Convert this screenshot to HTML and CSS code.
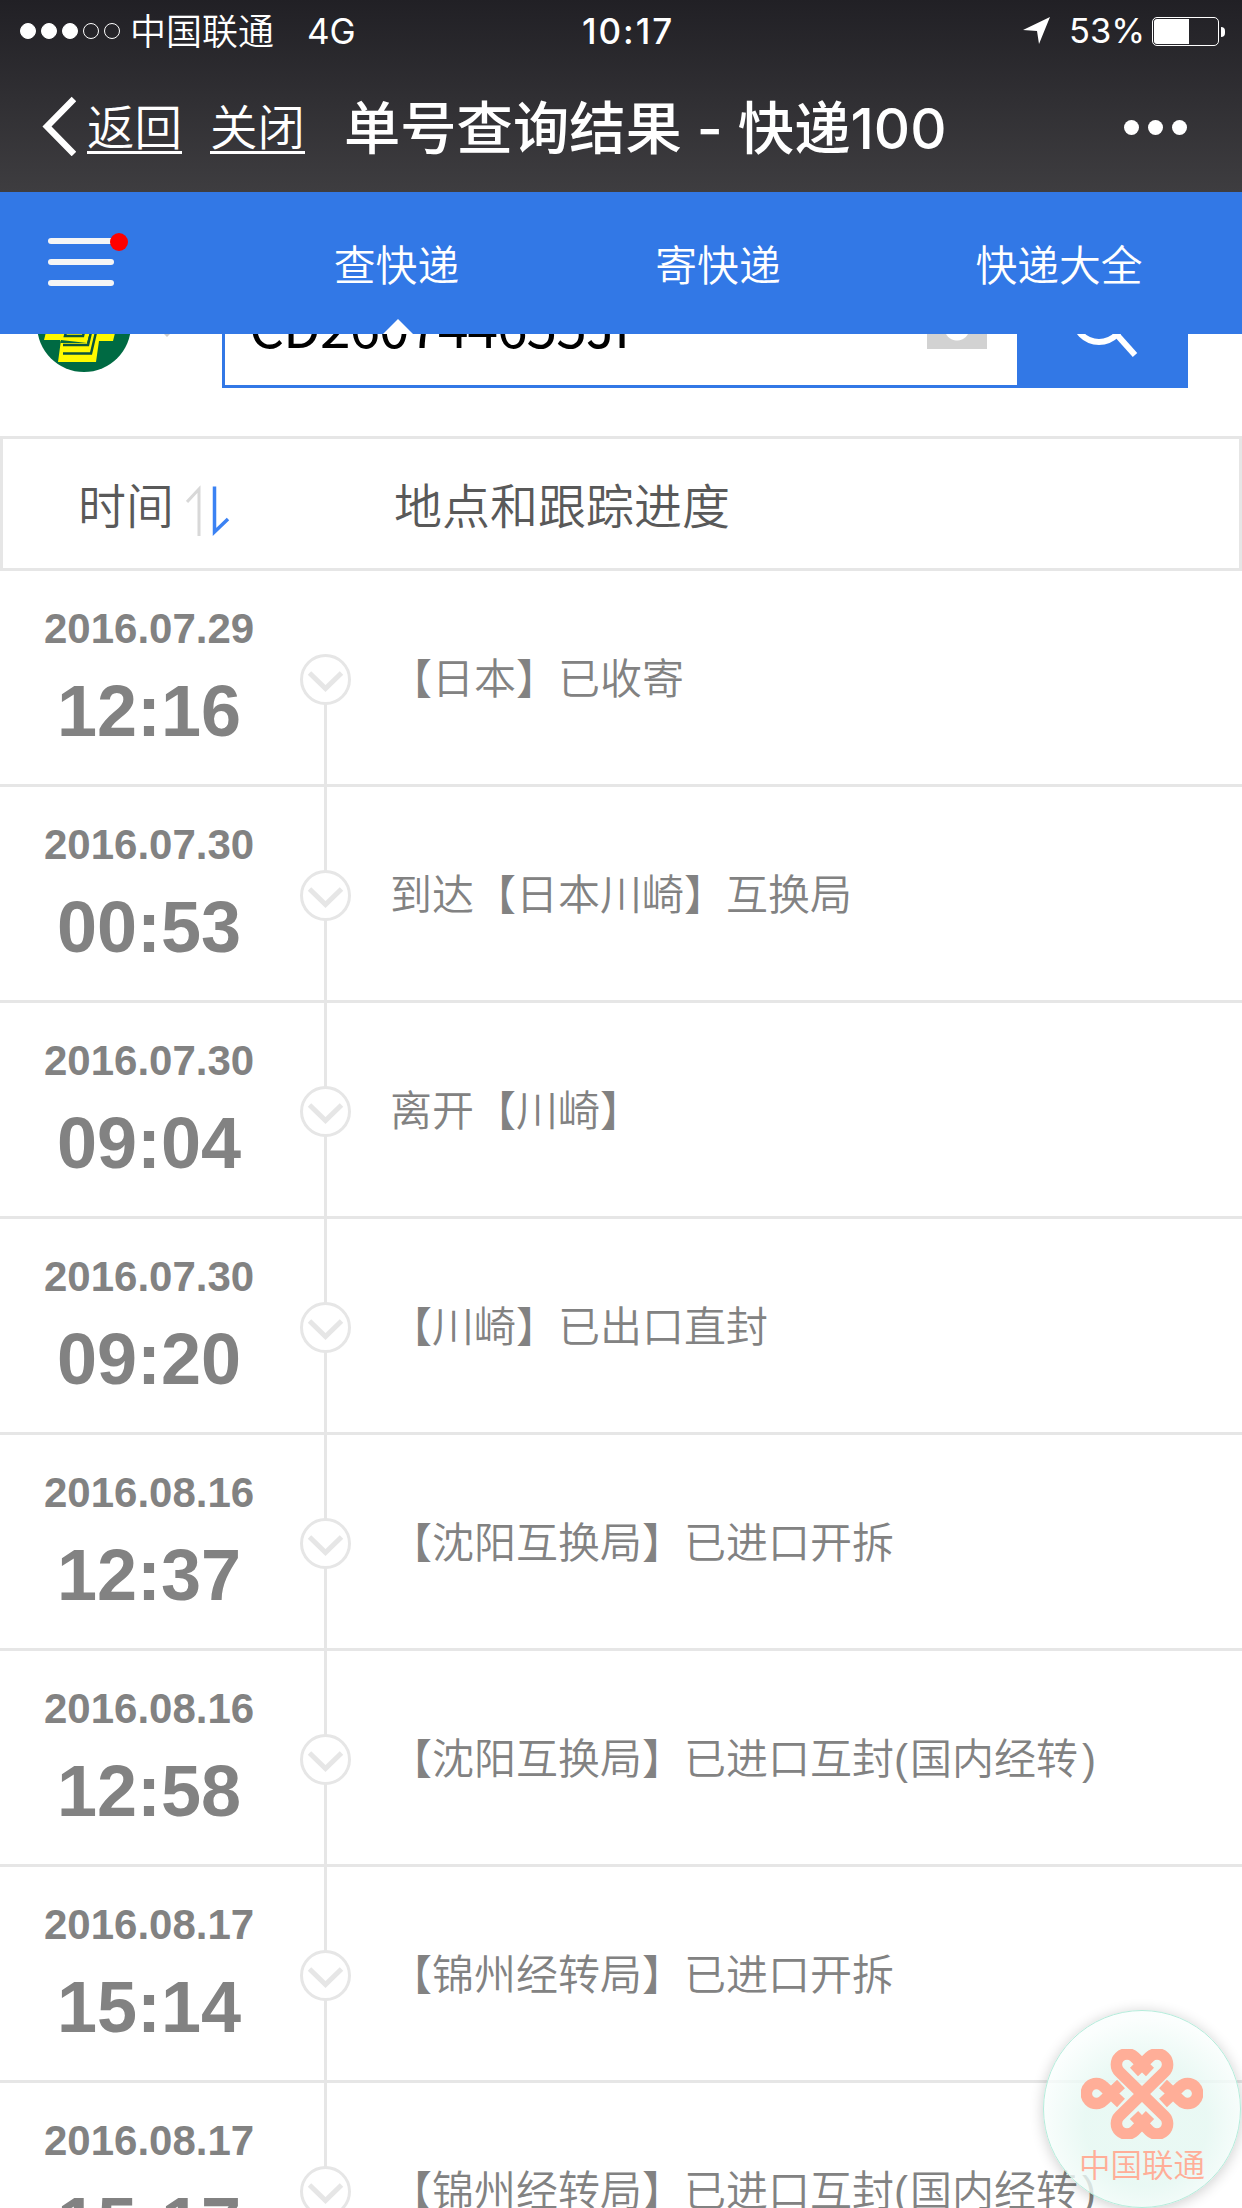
FILE: index.html
```html
<!DOCTYPE html>
<html lang="zh-CN">
  <head>
    <meta charset="UTF-8" />
    <meta name="viewport" content="width=device-width, initial-scale=1.0" />
    <title>单号查询结果 - 快递100</title>
    <link rel="stylesheet" href="styles.css">
  </head>
  <body>
    <header class="top">
      <div class="status">
        <div class="signal">
          <i class="on"></i><i class="on"></i><i class="on"></i><i></i><i></i>
        </div>
        <span class="carrier">中国联通</span>
        <span class="network">4G</span>
        <span class="clock">10:17</span>
        <svg class="locate" width="28" height="28" viewBox="0 0 28 28">
          <path d="M0 13 27 0 16 27 14 14Z" fill="#fff" />
        </svg>
        <span class="percent">53%</span>
        <div class="battery"><i></i></div>
      </div>
      <div class="titlebar">
        <svg class="back" width="34" height="60" viewBox="0 0 34 60">
          <path d="M32 3 5 30.500 32 58" fill="none" stroke="#fff" stroke-width="6.500" />
        </svg>
        <a class="link">返回</a>
        <a class="link">关闭</a>
        <h1>单号查询结果 - 快递100</h1>
        <div class="more"><i></i><i></i><i></i></div>
      </div>
    </header>
    <nav class="nav">
      <div class="menu"><i></i><i></i><i></i></div>
      <a class="active">查快递</a>
      <a>寄快递</a>
      <a>快递大全</a>
    </nav>
    <section class="search">
      <svg class="company" width="94" height="94" viewBox="0 0 94 94">
        <circle cx="47" cy="47" r="47" fill="#006a43" />
        <path d="M10 50H28L27 56H45L47 50H54L51 65H24L23 62H7ZM24 62 21 84H59L62 63H76L78 55H58L60 50H54L50 65Z" fill="#fffa00" />
        <path d="M30 50 28 58H46L48 50M26 67H51L55 50M26 75.500H54L60 50" fill="none" stroke="#0a5440" stroke-width="2.500" />
      </svg>
      <i class="arrow"></i>
      <div class="number">
        <span>CD260744655JP</span>
        <i class="camera"></i>
      </div>
      <div class="submit">
        <svg width="70" height="80" viewBox="0 0 70 80">
          <circle cx="31" cy="38" r="25" fill="none" stroke="#fff" stroke-width="6" />
          <path d="M50 57 67 76" stroke="#fff" stroke-width="6" />
        </svg>
      </div>
    </section>
    <div class="thead">
      <span class="th-time">时间</span>
      <svg class="sort" width="46" height="52" viewBox="0 0 46 52">
        <path d="M1 17 13 4V51" fill="none" stroke="#d8d8d8" stroke-width="3" />
        <path d="M28.500 1.500V47L42 34" fill="none" stroke="#3b82f3" stroke-width="3.500" />
      </svg>
      <span class="th-info">地点和跟踪进度</span>
    </div>
    <ul class="list"></ul>
    <div class="float">
      <svg width="122" height="90" viewBox="0 0 122 90">
        <g fill="none" stroke="#ffae98" stroke-width="11.500">
          <path d="M69 23 53.500 8A10.500 10.500 0 0 0 38.500 23L83.500 67A10.500 10.500 0 0 1 68.500 82L53 66" />
          <path d="M53 23 68.500 8A10.500 10.500 0 0 1 83.500 23L38.500 67A10.500 10.500 0 0 0 53.500 82L69 66" />
          <path d="M40 54 22.500 37.500A10 10 0 1 0 22.500 51.500L40 35" />
          <path d="M82 54 99.500 37.500A10 10 0 1 1 99.500 51.500L82 35" />
        </g>
      </svg>
      <span>中国联通</span>
    </div>
    <script>
      const arr = [
        { date: '2016.07.29', time: '12:16', text: '【日本】已收寄' },
        { date: '2016.07.30', time: '00:53', text: '到达【日本川崎】互换局' },
        { date: '2016.07.30', time: '09:04', text: '离开【川崎】' },
        { date: '2016.07.30', time: '09:20', text: '【川崎】已出口直封' },
        { date: '2016.08.16', time: '12:37', text: '【沈阳互换局】已进口开拆' },
        { date: '2016.08.16', time: '12:58', text: '【沈阳互换局】已进口互封(<span>国内经转</span>)' },
        { date: '2016.08.17', time: '15:14', text: '【锦州经转局】已进口开拆' },
        { date: '2016.08.17', time: '15:17', text: '【锦州经转局】已进口互封(<span>国内经转</span>)' },
      ]
      const list = document.querySelector('.list')
      for (let i = 0; i < arr.length; i++) {
        const li = document.createElement('li')
        li.innerHTML = `
          <div class="when">
            <span class="date">${arr[i].date}</span>
            <span class="time">${arr[i].time}</span>
          </div>
          <div class="line">
            <svg width="51" height="51" viewBox="0 0 51 51">
              <circle cx="25.5" cy="25.5" r="24" fill="#fff" stroke="#e6e6e6" stroke-width="3" />
              <path d="M9.500 19 25.500 34.500 41.500 19" fill="none" stroke="#e6e6e6" stroke-width="5" />
            </svg>
          </div>
          <p>${arr[i].text}</p>
        `
        list.appendChild(li)
      }
    </script>
  </body>
</html>
```
FILE: styles.css
```css
* {
  margin: 0;
  padding: 0;
  box-sizing: border-box;
}
body {
  width: 1242px;
  height: 2208px;
  overflow: hidden;
  background: #fff;
  font-family: "Liberation Sans", "Noto Sans CJK SC", sans-serif;
}
i {
  display: block;
}
svg {
  display: block;
  flex: none;
}
span,
h1,
p,
a {
  white-space: nowrap;
}
.top {
  height: 192px;
  color: #fff;
  background: linear-gradient(#212025, #3e3d40);
  font-family: Inter, "Noto Sans CJK SC", sans-serif;
}
.status {
  display: flex;
  align-items: center;
  height: 62px;
  padding-left: 20px;
  font-size: 36px;
  line-height: 62px;
}
.signal {
  display: flex;
  gap: 5px;
  width: 110px;
}
.signal i {
  width: 16px;
  height: 16px;
  border: 1px solid #fff;
  border-radius: 50%;
}
.signal .on {
  background: #fff;
}
.carrier {
  width: 177px;
  padding-top: 1px;
  font-weight: 350;
}
.network {
  width: 275px;
  font-size: 35px;
  font-weight: 400;
}
.clock {
  width: 441px;
  font-size: 35px;
  font-weight: 550;
  letter-spacing: 2px;
}
.locate {
  margin-right: 18px;
}
.percent {
  width: 83px;
  font-size: 34.500px;
  font-weight: 400;
}
.battery {
  position: relative;
  width: 67px;
  height: 29px;
  padding: 1px;
  border: 1px solid #fff;
  border-radius: 5px;
}
.battery i {
  width: 35px;
  height: 25px;
  background: #fff;
  border-radius: 3px 0 0 3px;
}
.battery::after {
  content: "";
  position: absolute;
  right: -7px;
  top: 9px;
  width: 4px;
  height: 10px;
  background: #fff;
  border-radius: 0 4px 4px 0;
}
.titlebar {
  display: flex;
  align-items: center;
  height: 130px;
  padding: 0 55px 0 42px;
}
.back {
  margin: 0 11px 2px 0;
}
.link {
  margin-right: 28px;
  height: 53px;
  line-height: 53px;
  font-size: 47.500px;
  font-weight: 350;
  border-bottom: 3px solid #fff;
}
.titlebar h1 {
  margin: 3px 0 0 11px;
  font-size: 56.300px;
  font-weight: 500;
  line-height: 80px;
}
.more {
  display: flex;
  gap: 9px;
  margin-left: auto;
}
.more i {
  width: 15px;
  height: 15px;
  background: #fff;
  border-radius: 50%;
}
.nav {
  position: relative;
  z-index: 1;
  display: grid;
  grid-template-columns: 236px 321px 322px 360px;
  grid-template-rows: 142px;
  height: 142px;
  background: #3278e6;
}
.nav a {
  position: relative;
  color: #fff;
  font-size: 41.800px;
  font-weight: 350;
  line-height: 149px;
  text-align: center;
}
.nav .active::after {
  content: "";
  position: absolute;
  left: 147px;
  bottom: 0;
  border: 15px solid transparent;
  border-top: 0;
  border-bottom-color: #fff;
}
.menu {
  position: relative;
  width: 66px;
  margin: 46px 0 0 48px;
}
.menu i {
  height: 6px;
  margin-bottom: 15px;
  background: #f5f5f5;
  border-radius: 3px;
}
.menu::after {
  content: "";
  position: absolute;
  left: 62px;
  top: -5px;
  width: 18px;
  height: 18px;
  background: #f00;
  border-radius: 50%;
}
.search {
  display: flex;
  align-items: center;
  height: 126px;
  margin-top: -72px;
  padding-left: 37px;
}
.company {
  margin-right: 26px;
}
.arrow {
  width: 20px;
  margin: 14px 45px 0 0;
  border: 10px solid transparent;
  border-top-color: #ccc;
  border-bottom: 0;
}
.number {
  display: flex;
  align-items: center;
  justify-content: space-between;
  width: 795px;
  height: 126px;
  padding: 0 30px 0 24px;
  border: 3px solid #3278e6;
  border-right: 0;
  font: 55px/112px "Noto Sans CJK SC", sans-serif;
  letter-spacing: -1px;
}
.number span {
  margin-top: -3px;
}
.camera {
  width: 60px;
  height: 48px;
  background: radial-gradient(circle at 30px 27px, #fff 12px, #d2d2d2 13px);
}
.submit {
  width: 171px;
  height: 126px;
  padding: 17px 0 0 51px;
  background: #3278e6;
}
.thead {
  display: flex;
  align-items: center;
  height: 135px;
  margin-top: 48px;
  padding-left: 75px;
  border: 3px solid #e6e6e6;
  color: #595959;
  font-size: 48px;
}
.thead span {
  margin-top: -2px;
  font-weight: 350;
}
.sort {
  margin: 14px 162px 0 12px;
}
.list {
  list-style: none;
}
.list li {
  display: flex;
  height: 216px;
  border-bottom: 3px solid #e6e6e6;
  color: #828282;
}
.when {
  display: flex;
  flex-direction: column;
  align-items: center;
  width: 300px;
  padding-top: 34px;
  font-weight: bold;
}
.date {
  width: 300px;
  padding-left: 44px;
  font-size: 42px;
  line-height: 48px;
}
.time {
  width: 300px;
  padding-left: 57px;
  font-size: 72px;
  line-height: 82px;
  margin-top: 17px;
}
.line {
  width: 51px;
  padding-top: 83px;
  background: linear-gradient(#e6e6e6, #e6e6e6) 24px 0 / 3px 100% no-repeat;
}
.list li:first-child .line {
  background-position-y: 100px;
}
.list p {
  margin-left: 39px;
  font-size: 42px;
  font-weight: 350;
  line-height: 217px;
}
.list p span {
  margin: 0 4px 0 2px;
}
.float {
  position: absolute;
  left: 1043px;
  top: 2010px;
  display: flex;
  flex-direction: column;
  align-items: center;
  width: 198px;
  height: 198px;
  padding-top: 38px;
  border: 1px solid #b5ecdb;
  border-radius: 50%;
  background: radial-gradient(circle at 52% 58%, rgba(228, 247, 241, 0.8) 40%, rgba(250, 254, 253, 0.8) 70%);
  box-shadow: 0 2px 14px rgba(0, 0, 0, 0.2);
  color: #ffae98;
  font-size: 31.500px;
  font-weight: 350;
}
.float span {
  line-height: 54px;
}
```
